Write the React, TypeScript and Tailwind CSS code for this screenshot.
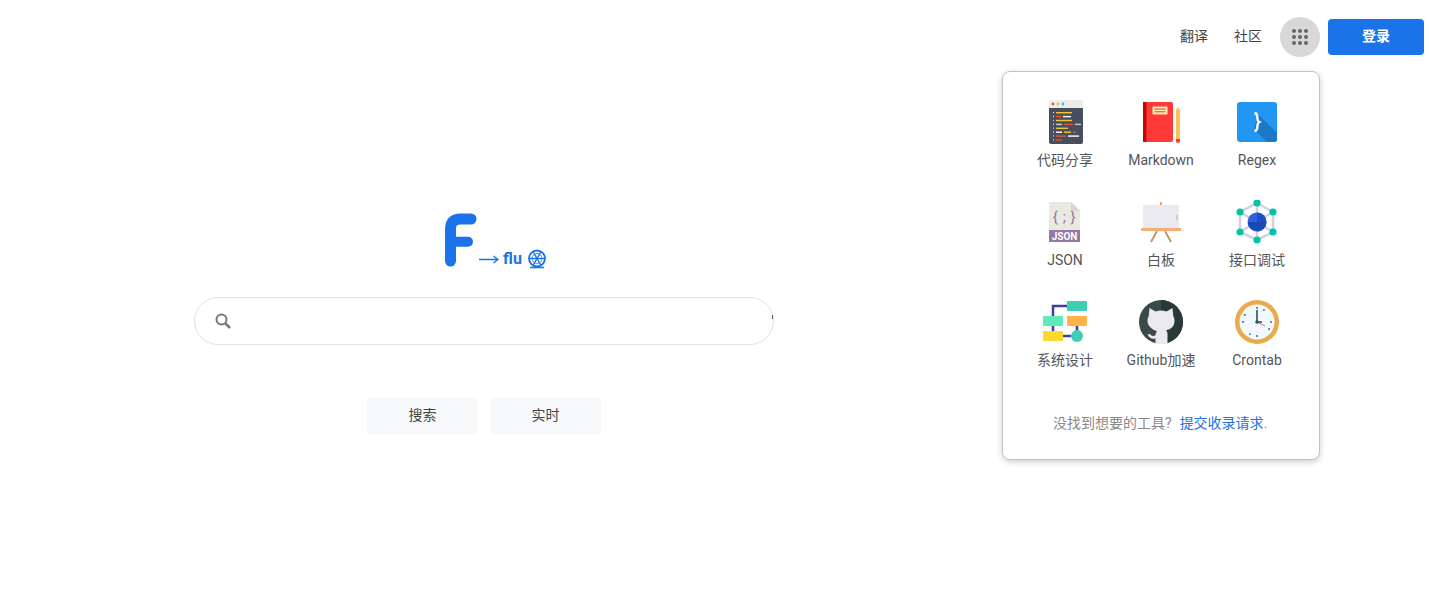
import type { ReactNode } from 'react'

const fontStack = "[font-family:Roboto,'Noto_Sans_CJK_SC',sans-serif]"

function CodeIcon() {
  const rows: [number, string, number][][] = [
    [[10, '#f4c430', 16]],
    [[10, '#e2572b', 5], [17, '#ffffff', 8]],
    [[10, '#f4c430', 16]],
    [[10, '#c9ccd1', 6], [18, '#e2572b', 9], [29, '#c9ccd1', 6]],
    [[10, '#f4c430', 12]],
    [[10, '#ffffff', 6], [18, '#f4c430', 7], [27, '#e2572b', 3]],
    [[10, '#e2572b', 10], [22, '#ffffff', 11]],
    [[10, '#e2572b', 6]],
  ]
  return (
    <svg width="44" height="44" viewBox="0 0 44 44">
      <path d="M6 2a2 2 0 0 1 2-2h30a2 2 0 0 1 2 2v6H6z" fill="#ececec" />
      <path d="M6 8h34v34a2 2 0 0 1-2 2H8a2 2 0 0 1-2-2z" fill="#474f5c" />
      <circle cx="10" cy="4" r="1.4" fill="#f0523d" />
      <circle cx="15" cy="4" r="1.4" fill="#f4c430" />
      <circle cx="20" cy="4" r="1.4" fill="#3dbdd8" />
      {rows.map((row, i) => (
        <g key={i}>
          <rect x="10" y={12 + i * 3.9} width="1" height="1" fill="#ffffff" />
          {row.map(([x, color, w], j) => (
            <rect key={j} x={x + 3} y={12 + i * 3.9} width={w} height="1.4" fill={color} />
          ))}
        </g>
      ))}
    </svg>
  )
}

function MarkdownIcon() {
  return (
    <svg width="44" height="44" viewBox="0 0 44 44">
      <path d="M4 2h28a2 2 0 0 1 2 2v36a2 2 0 0 1-2 2H4z" fill="#ff3838" />
      <rect x="4" y="2" width="3.4" height="40" fill="#c40606" />
      <rect x="13.5" y="6.5" width="15" height="8" rx="0.5" fill="#ffe7b3" />
      <rect x="15.5" y="8.6" width="11" height="1.1" fill="#e2572b" />
      <rect x="15.5" y="11.2" width="11" height="1.1" fill="#e2572b" />
      <path d="M37 10l2-3 2 3v30h-4z" fill="#fbbf55" />
      <path d="M37 39h4v2a2 2 0 0 1-4 0z" fill="#f0403d" />
    </svg>
  )
}

function RegexIcon() {
  return (
    <svg width="44" height="44" viewBox="0 0 44 44">
      <rect x="2" y="2" width="40" height="40" rx="3" fill="#2196f3" />
      <path d="M23 14l19 19v6a3 3 0 0 1-3 3H32L19 29z" fill="#1c78c6" />
      <path
        d="M19.500 13c2.500.2 2.800 1.600 2.800 4 0 2.600.3 4.200 2 5-1.700.8-2 2.400-2 5 0 2.400-.3 3.800-2.800 4"
        fill="none"
        stroke="#ffffff"
        strokeWidth="2.400"
      />
    </svg>
  )
}

function JsonIcon() {
  return (
    <svg width="44" height="44" viewBox="0 0 44 44">
      <path d="M6 2h22l9 9v31H6z" fill="#e9e9e0" />
      <path d="M28 2l9 9h-9z" fill="#d9d7ca" />
      <rect x="6" y="30" width="31" height="12" fill="#9777a8" />
      <text x="21.500" y="22" textAnchor="middle" fontSize="15" letterSpacing="0.500" fill="#9777a8" fontFamily="Roboto, sans-serif">
        {'{ ; }'}
      </text>
      <text x="21.500" y="40" textAnchor="middle" fontSize="10" fontWeight="700" fill="#ffffff" fontFamily="Roboto, sans-serif">
        JSON
      </text>
    </svg>
  )
}

function BoardIcon() {
  return (
    <svg width="44" height="44" viewBox="0 0 44 44">
      <rect x="21" y="2" width="2" height="4" fill="#f0a868" />
      <rect x="4" y="5" width="36" height="23" fill="#e9e9ef" />
      <rect x="37" y="15" width="1.5" height="5" fill="#c8c8cc" />
      <path d="M18 31l-6 11M26 31l6 11" stroke="#c49660" strokeWidth="2" />
      <rect x="2" y="28" width="40" height="3" fill="#f0b070" />
    </svg>
  )
}

function ApiIcon() {
  const nodes = [
    [22, 3],
    [38, 12],
    [38, 32],
    [22, 40],
    [5, 32],
    [5, 12],
  ]
  return (
    <svg width="44" height="44" viewBox="0 0 44 44">
      <path d="M22 3L38 12V32L22 40L5 32V12Z" fill="none" stroke="#ced2e2" strokeWidth="2.500" />
      <path d="M22 3V40M5 12L38 32M38 12L5 32" stroke="#ced2e2" strokeWidth="2.500" />
      {nodes.map(([cx, cy]) => (
        <circle key={`${cx}-${cy}`} cx={cx} cy={cy} r="3.600" fill="#00c4a7" />
      ))}
      <circle cx="22" cy="22" r="9.500" fill="#2f62e0" />
      <path d="M22 12.500a9.500 9.500 0 0 1 0 19z" fill="#1d4fc4" />
      <path d="M13 22h18v2a9.500 9.500 0 0 1-18 0z" fill="#1b4ab8" />
    </svg>
  )
}

function SystemIcon() {
  return (
    <svg width="44" height="44" viewBox="0 0 44 44">
      <path d="M24 6H10V16M10 26V31M20 36H28M34 26V31" fill="none" stroke="#453f9c" strokeWidth="2.500" />
      <rect x="24" y="1" width="20" height="10" rx="1" fill="#3dceb3" />
      <rect x="0" y="16" width="20" height="10" rx="1" fill="#5eebba" />
      <rect x="24" y="16" width="20" height="10" rx="1" fill="#ffb14a" />
      <rect x="0" y="31" width="20" height="10" rx="1" fill="#ffd92e" />
      <circle cx="34" cy="36" r="6" fill="#3dceb3" />
    </svg>
  )
}

function GithubIcon() {
  return (
    <svg width="44" height="44" viewBox="0 0 44 44">
      <circle cx="22" cy="22" r="22" fill="#3a4a4a" />
      <path d="M22 0a22 22 0 0 1 0 44z" fill="#2a3838" />
      <path
        d="M10.500 8l6 3.500a17 17 0 0 1 11 0l6-3.500.8 8c1 2 1.200 3.500 1.200 5 0 5-3.500 8.500-8.500 9.300 1 1 1.500 2.200 1.500 4V44h-12v-5.500c-4 .8-6.500-.7-8-4l2.500-.5c1.200 2 3 2.500 5.500 1.500 0-1.500.5-3 1.500-4.200C13 29.500 8.500 26 8.500 21c0-1.500.3-3 1.200-5z"
        fill="#e9e9ee"
      />
    </svg>
  )
}

function ClockIcon() {
  const ticks = Array.from({ length: 12 }, (_, i) => (i * Math.PI) / 6).filter((_, i) => i % 3 === 0 || i % 3 === 1)
  return (
    <svg width="44" height="44" viewBox="0 0 44 44">
      <circle cx="22" cy="22" r="22" fill="#eaa94a" />
      <circle cx="22" cy="22" r="17.500" fill="#f0f9fd" />
      {ticks.map((a, i) => (
        <circle key={i} cx={22 + 14 * Math.sin(a)} cy={22 - 14 * Math.cos(a)} r="0.900" fill="#3c5a78" />
      ))}
      <path d="M22 22l8 4" stroke="#f0506a" strokeWidth="1" />
      <path d="M22 10v12h5" fill="none" stroke="#2f4f70" strokeWidth="1.600" />
      <circle cx="22" cy="22" r="1.800" fill="#2f4f70" />
    </svg>
  )
}

function WheelIcon() {
  const spokes = [0, 60, 120, 180, 240, 300]
  return (
    <svg width="20" height="20" viewBox="0 0 20 20" className="ml-[5px]">
      <circle cx="10" cy="9.500" r="8" fill="none" stroke="#1a73e8" strokeWidth="1.800" />
      <circle cx="10" cy="9.500" r="5" fill="none" stroke="#1a73e8" strokeWidth="0.800" />
      {spokes.map((deg) => (
        <path key={deg} d="M10 9.500V2" stroke="#1a73e8" strokeWidth="1.400" transform={`rotate(${deg + 30} 10 9.500)`} />
      ))}
      <path d="M3 18.500h14" stroke="#1a73e8" strokeWidth="1.600" />
    </svg>
  )
}

function FLogo() {
  return (
    <svg width="32" height="54" viewBox="0 0 32 54" fill="none" stroke="#1a73e8" strokeLinecap="round">
      <path d="M5.500 48V16Q5.500 6 15.500 6H26" strokeWidth="11" />
      <path d="M6 28.700H23" strokeWidth="10" />
    </svg>
  )
}

function ArrowGlyph() {
  return (
    <svg width="20" height="10" viewBox="0 0 20 10" fill="none" stroke="#1a73e8" strokeWidth="1.300">
      <path d="M0 5.500H18.500M14.500 2l4.500 3.500-4.500 3.500" />
    </svg>
  )
}

const tools: { name: string; icon: ReactNode }[] = [
  { name: '代码分享', icon: <CodeIcon /> },
  { name: 'Markdown', icon: <MarkdownIcon /> },
  { name: 'Regex', icon: <RegexIcon /> },
  { name: 'JSON', icon: <JsonIcon /> },
  { name: '白板', icon: <BoardIcon /> },
  { name: '接口调试', icon: <ApiIcon /> },
  { name: '系统设计', icon: <SystemIcon /> },
  { name: 'Github加速', icon: <GithubIcon /> },
  { name: 'Crontab', icon: <ClockIcon /> },
]

function AppsMenu() {
  return (
    <div className="absolute right-[109px] top-[71px] h-[389px] w-[318px] rounded-lg border border-[#c4c4c4] bg-white pl-[14px] pt-[28px] shadow-[0_2px_6px_rgba(0,0,0,0.2)]">
      <div className="grid w-[288px] grid-cols-3">
        {tools.map((tool) => (
          <a key={tool.name} className="flex h-[100px] w-[96px] flex-col items-center">
            <span className="flex h-[44px] w-[44px]">{tool.icon}</span>
            <span className="mt-[6px] whitespace-nowrap text-sm leading-5 text-[#555]">{tool.name}</span>
          </a>
        ))}
      </div>
      <p className="mt-[13px] pl-[36px] whitespace-nowrap text-sm leading-5 text-[#888]">
        没找到想要的工具?<a className="ml-2 text-[#1a73e8]">提交收录请求</a>.
      </p>
    </div>
  )
}

export default function App() {
  return (
    <div className={`relative h-screen overflow-hidden bg-white ${fontStack}`}>
      <header className="flex items-center justify-end pr-[5px] pt-[17px]">
        <a className="pb-[2px] text-sm text-[#444]">翻译</a>
        <a className="ml-[26px] pb-[2px] text-sm text-[#444]">社区</a>
        <button type="button" className="ml-[18px] flex h-10 w-10 items-center justify-center rounded-full bg-[#d8d8da]">
          <svg width="20" height="20" viewBox="0 0 20 20" fill="#666666">
            {[4, 10, 16].map((y) =>
              [4, 10, 16].map((x) => <circle key={`${x}-${y}`} cx={x} cy={y} r="2" />),
            )}
          </svg>
        </button>
        <button type="button" className="ml-2 h-9 w-24 rounded bg-[#1a73e8] pb-[2px] text-sm font-bold text-white">
          登录
        </button>
      </header>

      <main className="mt-[154px] flex w-[968px] flex-col items-center">
        <div className="flex h-[56px] items-end pl-[24px]">
          <FLogo />
          <span className="-mb-[2px] ml-[2px] flex items-center text-[#1a73e8]">
            <ArrowGlyph />
            <span className="ml-[4px] text-base leading-5 font-bold">flu</span>
            <WheelIcon />
          </span>
        </div>

        <div className="relative mt-[30px] flex h-12 w-[580px] items-center rounded-full border border-[#dfe1e5] pl-[20px]">
          <svg width="16" height="16" viewBox="0 0 16 16" fill="none" stroke="#777777">
            <circle cx="6.500" cy="6.500" r="5" strokeWidth="2" />
            <path d="M10.500 10.500L15 15" strokeWidth="2.500" />
          </svg>
          <span className="absolute right-0 top-[17px] h-1 w-px bg-[#555]" />
        </div>

        <div className="mt-[52px] flex gap-3">
          <button type="button" className="h-[38px] w-[111px] rounded bg-[#f8f9fa] pb-[2px] text-sm text-[#444]">
            搜索
          </button>
          <button type="button" className="h-[38px] w-[111px] rounded bg-[#f8f9fa] pb-[2px] text-sm text-[#444]">
            实时
          </button>
        </div>
      </main>

      <AppsMenu />
    </div>
  )
}
